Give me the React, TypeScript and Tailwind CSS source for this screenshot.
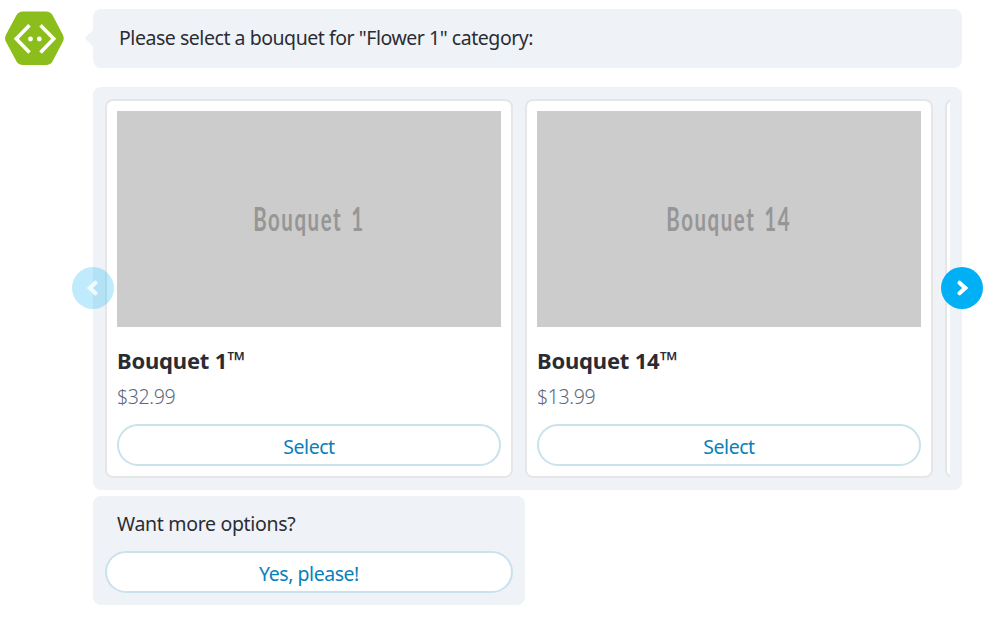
type Bouquet = { label: string; price: string };

const bouquets: Bouquet[] = [
  { label: 'Bouquet 1', price: '$32.99' },
  { label: 'Bouquet 14', price: '$13.99' },
];

function BotLogo() {
  return (
    <svg className="mt-[11px] ml-[5px] h-[55px] w-[59px] shrink-0" viewBox="0 0 59 55">
      <path
        d="M18 .5h23c2.800 0 5.100 1.200 6.600 3.700l10.100 19.300c1.400 2.600 1.400 5 0 7.600L47.600 50.300C46.200 52.800 44 54 41 54H18c-3 0-5.200-1.200-6.600-3.700L1.100 31.100c-1.400-2.600-1.400-5 0-7.600L11.400 4.200C12.900 1.700 15.200.5 18 .5z"
        fill="#8cbe1b"
      />
      <path d="M24.500 14.300 11.300 27.700l13.200 13.700M35.500 14.300l13.200 13.400-13.200 13.700" fill="none" stroke="#fff" strokeWidth="3.600" />
      <circle cx="25.500" cy="28" r="2.400" fill="#fff" />
      <circle cx="34.300" cy="28" r="2.400" fill="#fff" />
    </svg>
  );
}

function PillButton({ children }: { children: string }) {
  return (
    <button className="flex h-[42px] w-full items-center justify-center rounded-full border-2 border-[#c9e2ec] bg-white pt-[4px] text-[19.500px] leading-none tracking-[-0.45px] text-[#0a80b8]">
      {children}
    </button>
  );
}

function Card({ item }: { item: Bouquet }) {
  return (
    <article className="h-[379px] w-[408px] shrink-0 rounded-lg border-2 border-[#e6e6e6] bg-white p-2.5">
      <div className="flex h-[216px] items-center justify-center bg-[#ccc] pb-[2px]">
        <span className="scale-x-[0.62] font-['Lato',sans-serif] text-[33px] leading-none font-bold tracking-[2.500px] [word-spacing:4px] whitespace-nowrap text-[#969696]">
          {item.label}
        </span>
      </div>
      <h2 className="mt-[18px] h-[30px] text-[22px] leading-[30px] font-bold tracking-[-0.2px] whitespace-nowrap text-[#2b2c33]">
        {item.label}
        <span className="text-[23.500px] leading-none">™</span>
      </h2>
      <p className="mt-[8px] h-[28px] text-[19.500px] leading-[28px] font-light tracking-[-0.35px] text-[#5c6880]">{item.price}</p>
      <div className="mt-[13px]">
        <PillButton>Select</PillButton>
      </div>
    </article>
  );
}

function Arrow({ direction }: { direction: 'left' | 'right' }) {
  const left = direction === 'left';
  return (
    <button
      aria-label={left ? 'Previous' : 'Next'}
      className={`absolute top-[180px] size-[42px] rounded-full ${left ? '-left-[21px] bg-[#00aff4]/25' : '-right-[21px] bg-[#00aff4]'}`}
    >
      <svg className="size-[42px]" viewBox="0 0 42 42" fill="none" stroke="#fff" strokeOpacity={left ? 0.8 : 1} strokeWidth="4.200" strokeLinecap="round" strokeLinejoin="miter">
        <path d={left ? 'M23.500 15.800 17.800 21l5.700 5.200' : 'M18.500 15.800 24.200 21l-5.700 5.200'} />
      </svg>
    </button>
  );
}

export default function App() {
  return (
    <main className="flex h-[618px] w-[995px] overflow-hidden bg-white font-['Noto_Sans',sans-serif] text-[#2b2c33]">
      <div className="w-[93px] shrink-0">
        <BotLogo />
      </div>
      <div className="w-[869px] shrink-0 pt-[9px]">
        <section className="relative flex h-[59px] items-center rounded-lg bg-[#eff3f8] pb-[2px] pl-[26px]">
          <svg className="absolute top-[17px] -left-[8px] h-6 w-[9px]" viewBox="0 0 9 24">
            <path d="M9 0C8.500 4 7 6 4 8L1.500 10.200c-1.500 1.500-1.500 2.500 0 4L5 17.500C7.500 19.500 8.500 21 9 24z" fill="#eff3f8" />
          </svg>
          <p className="text-[19.500px] leading-none tracking-[-0.46px] whitespace-nowrap">Please select a bouquet for "Flower 1" category:</p>
        </section>

        <section className="relative mt-[19px] h-[403px] rounded-lg bg-[#eff3f8] p-3">
          <div className="flex gap-3 overflow-hidden">
            {bouquets.map((item) => (
              <Card key={item.label} item={item} />
            ))}
            <article className="h-[379px] w-[408px] shrink-0 rounded-lg border-2 border-[#e6e6e6] bg-white" />
          </div>
          <Arrow direction="left" />
          <Arrow direction="right" />
        </section>

        <section className="mt-1.5 h-[109px] w-[432px] rounded-lg bg-[#eff3f8] p-3">
          <p className="mb-[11px] h-8 pl-3 text-[19.500px] leading-8 tracking-[-0.32px]">Want more options?</p>
          <PillButton>Yes, please!</PillButton>
        </section>
      </div>
    </main>
  );
}
